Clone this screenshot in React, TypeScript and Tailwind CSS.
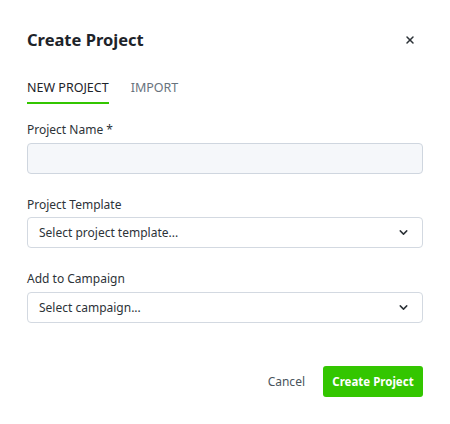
import { ChevronDown, X } from "lucide-react";

function SelectBox({ placeholder }: { placeholder: string }) {
  return (
    <div className="flex h-[31px] items-center justify-between rounded-[4px] border border-[#d3d9e1] bg-white pl-[11px] pr-[12px]">
      <span className="text-[12px] text-[#2d3338]">{placeholder}</span>
      <ChevronDown size={13} strokeWidth={2.75} className="text-[#2d3338]" />
    </div>
  );
}

export default function App() {
  return (
    <div
      className="flex h-[424px] w-[450px] flex-col bg-white px-[27px] pt-[28px]"
      style={{ fontFamily: '"Noto Sans", "Open Sans", sans-serif' }}
    >
      <div className="flex h-[24px] items-center justify-between">
        <h2 className="text-[16.5px] font-bold leading-[24px] text-[#1d2329]">Create Project</h2>
        <button className="mr-[7px] text-[#2d3338]" title="Close">
          <X size={12} strokeWidth={3} />
        </button>
      </div>

      <div className="mt-[26px] flex gap-[22px]">
        <div className="border-b-2 border-[#33c600] pb-[4px] text-[12.5px] leading-[20px] text-[#1d2329]">NEW PROJECT</div>
        <div className="pb-[4px] text-[12.5px] leading-[20px] text-[#68737d]">IMPORT</div>
      </div>

      <label className="mt-[16px] block text-[12px] leading-[20px] text-[#2d3338]">Project Name *</label>
      <input className="mt-[3px] h-[31px] w-full rounded-[4px] border border-[#cfd6df] bg-[#f5f7fa] px-[11px] text-[12px] outline-none" />

      <label className="mt-[21px] block text-[12px] leading-[20px] text-[#2d3338]">Project Template</label>
      <div className="mt-[2px]">
        <SelectBox placeholder="Select project template..." />
      </div>

      <label className="mt-[21px] block text-[12px] leading-[20px] text-[#2d3338]">Add to Campaign</label>
      <div className="mt-[3px]">
        <SelectBox placeholder="Select campaign..." />
      </div>

      <div className="mt-[43px] flex items-center justify-end gap-[18px]">
        <button className="text-[12px] text-[#49545c]">Cancel</button>
        <button className="h-[31px] w-[100px] rounded-[3px] bg-[#33c600] text-[11.5px] font-bold text-white">
          Create Project
        </button>
      </div>
    </div>
  );
}
